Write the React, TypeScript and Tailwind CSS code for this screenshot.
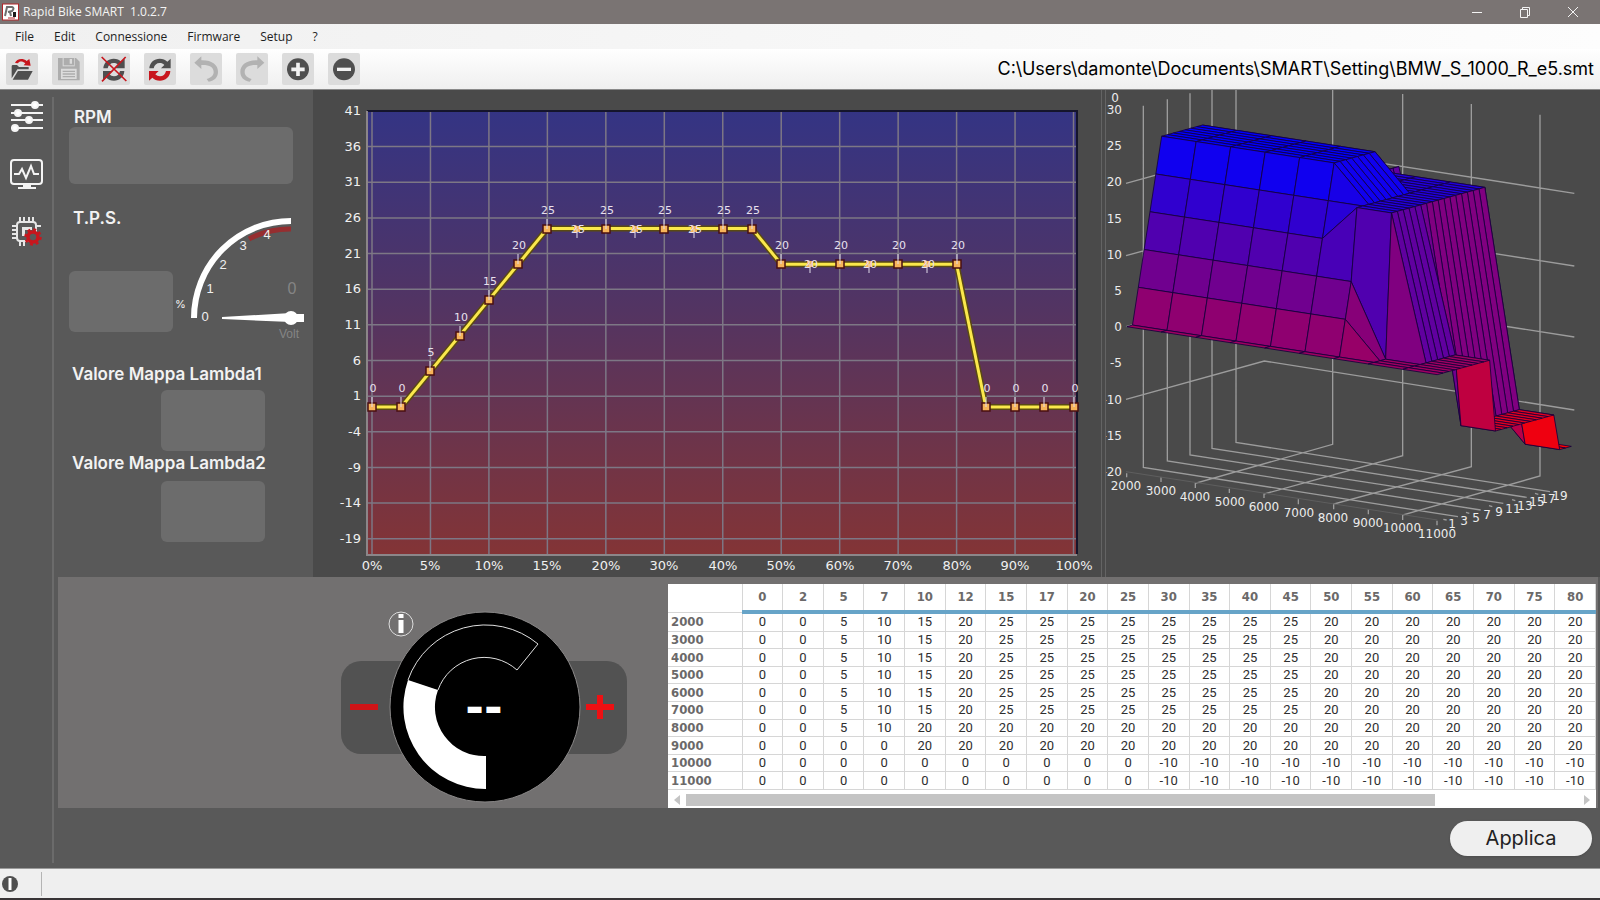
import type { ReactNode } from "react";

const MENU = ["File", "Edit", "Connessione", "Firmware", "Setup", "?"];

const TPS = [0, 2, 5, 7, 10, 12, 15, 17, 20, 25, 30, 35, 40, 45, 50, 55, 60, 65, 70, 75, 80];

const lowRow = [0, 0, 5, 10, 15, 20, 25, 25, 25, 25, 25, 25, 25, 25, 20, 20, 20, 20, 20, 20, 20];
const topRow = [...Array(10).fill(0), ...Array(11).fill(-10)];

const MAP: { rpm: number; values: number[] }[] = [
  { rpm: 2000, values: lowRow },
  { rpm: 3000, values: lowRow },
  { rpm: 4000, values: lowRow },
  { rpm: 5000, values: lowRow },
  { rpm: 6000, values: lowRow },
  { rpm: 7000, values: lowRow },
  { rpm: 8000, values: [0, 0, 5, 10, ...Array(17).fill(20)] },
  { rpm: 9000, values: [0, 0, 0, 0, ...Array(17).fill(20)] },
  { rpm: 10000, values: topRow },
  { rpm: 11000, values: topRow },
];

/* ---------- Toolbar ---------- */

function ToolButton({ label, children }: { label: string; children: ReactNode }) {
  return (
    <button type="button" aria-label={label} title={label} className="h-8 w-8 rounded-xs bg-[#dcdcdc] hover:bg-[#cfcfcf]">
      <svg viewBox="0 0 96 96" className="h-8 w-8">
        {children}
      </svg>
    </button>
  );
}

function SyncShape({ bottom }: { bottom: string }) {
  return (
    <>
      <path d="M16 46 C17 28 31 17 47 17 C57 17 64 20 70 26 L80 17 V46 H51 L61 36 C57 32 53 30 47 30 C38 30 31 36 29 46z" fill="#4f4f4f" />
      <path d="M79 54 C78 72 64 83 48 83 C38 83 31 80 25 74 L15 83 V54 H44 L34 64 C38 68 42 70 48 70 C57 70 64 64 66 54z" fill={bottom} />
    </>
  );
}

function Toolbar() {
  return (
    <div className="flex h-[41px] items-center justify-between border-b border-[#8a8a8a] bg-gradient-to-b from-white to-[#efefef] pr-[6px] pl-[6px]">
      <div className="flex gap-[14px]">
        <ToolButton label="Apri">
          <path d="M17 76 V40 Q17 36 21 36 H33 L39 42 H68 V49 H34z" fill="#4f4f4f" />
          <path d="M36 54 H80 L66 80 H20z" fill="#4f4f4f" />
          <path d="M27 30 C32 17 50 14 62 24 L70 18 L74 38 L53 37 L58 31 C48 23 39 25 36 31z" fill="#c8161d" />
        </ToolButton>
        <ToolButton label="Salva">
          <path d="M18 15 H72 L83 26 V82 H18z" fill="#adadad" />
          <path d="M32 14 H68 V40 H32z" fill="#dcdcdc" />
          <path d="M35 15 H66 V37 H35z" fill="#adadad" />
          <path d="M53 18 H60 V32 H53z M27 47 H74 V78 H27z" fill="#dcdcdc" />
          <path d="M32 55 H69 M32 63 H69 M32 71 H69" stroke="#adadad" strokeWidth="4" />
        </ToolButton>
        <ToolButton label="Disconnetti">
          <SyncShape bottom="#4f4f4f" />
          <path d="M11 12 L85 84 M83 12 L12 85" stroke="#c8161d" strokeWidth="5" />
        </ToolButton>
        <ToolButton label="Connetti">
          <SyncShape bottom="#c8161d" />
        </ToolButton>
        <ToolButton label="Annulla">
          <path d="M13 29 L34 10 V22 C66 21 84 36 84 56 C84 72 74 83 56 86 L50 78 C64 74 71 67 71 57 C71 42 58 35 34 36 V48z" fill="#b2b2b2" />
        </ToolButton>
        <ToolButton label="Ripristina">
          <path d="M85 29 L64 10 V22 C32 21 13 36 13 56 C13 72 23 83 41 86 L47 78 C33 74 26 67 26 57 C26 42 39 35 64 36 V48z" fill="#b2b2b2" />
        </ToolButton>
        <ToolButton label="Aumenta">
          <circle cx="48" cy="49" r="33" fill="#4f4f4f" />
          <path d="M48 29 V69 M28 49 H68" stroke="#f2f2f2" strokeWidth="11" />
        </ToolButton>
        <ToolButton label="Diminuisci">
          <circle cx="48" cy="49" r="33" fill="#4f4f4f" />
          <path d="M27 49 H69" stroke="#f2f2f2" strokeWidth="10" />
        </ToolButton>
      </div>
      <span className="font-['Inter',sans-serif] text-lg text-black">
        C:\Users\damonte\Documents\SMART\Setting\BMW_S_1000_R_e5.smt
      </span>
    </div>
  );
}

/* ---------- Sidebar ---------- */

function Sidebar() {
  return (
    <nav className="flex w-[54px] shrink-0 flex-col pt-[7px] pb-[5px]">
      <div className="flex flex-1 flex-col items-center gap-[22px] border-r-2 border-[#6b6b6b] pt-[2px] pl-[2px]">
        <button type="button" aria-label="Mappe">
          <svg viewBox="0 0 36 36" className="h-9 w-9" stroke="#f4f4f4" strokeWidth="2" fill="#ffffff">
            <path d="M2 6 H34 M2 14 H34 M2 21 H34 M2 29 H34" />
            <circle cx="26" cy="6" r="3" />
            <circle cx="9" cy="14" r="3" />
            <circle cx="20" cy="21" r="3" />
            <circle cx="6" cy="29" r="3" />
          </svg>
        </button>
        <button type="button" aria-label="Monitor">
          <svg viewBox="0 0 36 36" className="h-9 w-9" fill="none" stroke="#f4f4f4" strokeWidth="2">
            <rect x="2" y="3" width="31" height="24" rx="3" />
            <path d="M5 17 H10 L13 12 L17 21 L22 9 L25 17 H30" />
            <path d="M9 31 H27" />
            <path d="M14 29 H22" strokeWidth="3" />
          </svg>
        </button>
        <button type="button" aria-label="Centralina">
          <svg viewBox="0 0 36 36" className="h-9 w-9" fill="none" stroke="#e6e6e6" strokeWidth="2">
            <rect x="8" y="7" width="19" height="19" rx="3" />
            <path d="M11 2 V7 M15 2 V7 M20 2 V7 M24 2 V7 M11 26 V31 M15 26 V31 M3 11 H8 M3 15 H8 M3 19 H8 M3 23 H8 M27 11 H32" />
            <path d="M13 12 H23 V15 H16 V21 H13z" fill="#e6e6e6" stroke="none" />
            <circle cx="24" cy="22" r="5" stroke="#c8161d" strokeWidth="3.5" fill="#595959" />
            <circle cx="24" cy="22" r="7.5" stroke="#c8161d" strokeWidth="2.5" strokeDasharray="2.95 2.94" />
          </svg>
        </button>
      </div>
    </nav>
  );
}

/* ---------- Live values ---------- */

function VoltGauge() {
  return (
    <svg viewBox="0 0 130 130" className="h-[130px] w-[130px]" fontFamily="'Liberation Sans', sans-serif" fontSize="13" fontWeight="400" textAnchor="middle">
      <path d="M12 103 A97 97 0 0 1 109 6" fill="none" stroke="#ffffff" strokeWidth="6" />
      <path d="M67 24 A89 89 0 0 1 109 14" fill="none" stroke="#962e30" strokeWidth="5" />
      <g fill="#f0f0f0">
        <text x="23" y="106">0</text>
        <text x="28" y="78">1</text>
        <text x="41" y="54">2</text>
        <text x="61" y="35">3</text>
        <text x="85" y="24">4</text>
      </g>
      <text x="110" y="79" fontSize="16" fill="#858585">0</text>
      <text x="107" y="123" fontSize="12" fill="#858585">Volt</text>
      <path d="M40 102 L109 98 V107 L40 104z M109 99 H122 V107 H109z" fill="#ffffff" />
      <circle cx="109" cy="103" r="7" fill="#ffffff" />
    </svg>
  );
}

function Readouts() {
  return (
    <section className="bg-[#595959] pt-[15px] pl-[15px] font-['Inter',sans-serif] text-[17px] font-semibold text-[#f2f2f2]">
      <h2 className="h-[22px] pl-[5px] leading-6">RPM</h2>
      <output aria-label="RPM" className="block h-[57px] w-[224px] rounded-md bg-[#6c6c6c]" />
      <div className="flex h-[166px]">
        <div className="flex w-[104px] flex-col pt-[22px]">
          <h2 className="h-[65px] pl-1 leading-6">T.P.S.</h2>
          <output aria-label="T.P.S." className="block h-[61px] rounded-md bg-[#6c6c6c]" />
        </div>
        <span className="w-3 pt-[111px] pl-[2px] text-[11px] leading-[18px] font-normal">%</span>
        <div className="-ml-[3px] pt-[31px]">
          <VoltGauge />
        </div>
      </div>
      <h2 className="mt-[12px] h-[28px] pl-[3px] leading-6">Valore Mappa Lambda1</h2>
      <output aria-label="Valore Mappa Lambda1" className="ml-[92px] block h-[61px] w-[104px] rounded-md bg-[#6c6c6c]" />
      <h2 className="h-[30px] pl-[3px] leading-6">Valore Mappa Lambda2</h2>
      <output aria-label="Valore Mappa Lambda2" className="ml-[92px] block h-[61px] w-[104px] rounded-md bg-[#6c6c6c]" />
    </section>
  );
}

/* ---------- 2D chart ---------- */

const CURVE = [0, 0, 5, 10, 15, 20, 25, 25, 25, 25, 25, 25, 25, 25, 20, 20, 20, 20, 20, 20, 20, 0, 0, 0, 0];
const X_LABELS = ["0%", "5%", "10%", "15%", "20%", "30%", "40%", "50%", "60%", "70%", "80%", "90%", "100%"];
const Y_LABELS = [41, 36, 31, 26, 21, 16, 11, 6, 1, -4, -9, -14, -19];
// labels drawn on the line itself instead of above it
const INLINE_LABELS = [7, 9, 11, 15, 17, 19];

const px = (i: number) => 59 + i * 29.23;
const py = (v: number) => 317 - v * 7.14;

function CurveChart() {
  const points = CURVE.map((v, i) => `${px(i)},${py(v)}`).join(" ");
  return (
    <svg viewBox="0 0 788 487" className="h-full w-full" fontFamily="'DejaVu Sans', sans-serif">
      <defs>
        <linearGradient id="plot" x1="0" y1="0" x2="0" y2="1">
          <stop offset="0" stopColor="#343484" />
          <stop offset="0.45" stopColor="#533462" />
          <stop offset="1" stopColor="#833436" />
        </linearGradient>
      </defs>
      <rect x="54" y="21" width="710" height="443" fill="url(#plot)" />
      <g stroke="#7d7785" strokeWidth="1.5">
        {X_LABELS.map((label, i) => (
          <line key={label} x1={px(i * 2)} x2={px(i * 2)} y1="21" y2="464" />
        ))}
        {Y_LABELS.slice(1).map((v, i) => (
          <line key={v} x1="54" x2="764" y1={56.6 + i * 35.65} y2={56.6 + i * 35.65} />
        ))}
      </g>
      <path d="M54 21 H764 V464" fill="none" stroke="#15152c" strokeWidth="2" />
      <path d="M54 21 V465 H764" fill="none" stroke="#8c8689" strokeWidth="2" />
      <g fill="#f0f0f0" fontSize="13">
        {Y_LABELS.map((v, i) => (
          <text key={v} x="48" y={25 + Math.round(i * 35.65)} textAnchor="end">{v}</text>
        ))}
        {X_LABELS.map((label, i) => (
          <text key={label} x={Math.round(px(i * 2))} y="480" textAnchor="middle">{label}</text>
        ))}
      </g>
      <polyline points={points} fill="none" stroke="#5a4a12" strokeWidth="6" />
      <polyline points={points} fill="none" stroke="#fbe84c" strokeWidth="3" />
      {CURVE.map((v, i) => {
        const inline = INLINE_LABELS.includes(i);
        const x = Math.round(px(i));
        const y = Math.round(py(v));
        return (
          <g key={i}>
            {inline ? (
              <rect x={x - 3} y={y - 3} width="6" height="6" fill="#f7b45a" />
            ) : (
              <rect x={x - 4} y={y - 4} width="8" height="8" fill="#f7b45a" stroke="#4a0f10" strokeWidth="1.5" />
            )}
            <line x1={x} x2={x} y1={inline ? y + 9 : y - 10} y2={y} stroke="#e2dcea" strokeWidth="1" />
            <text x={x + 1} y={inline ? y + 4 : y - 15} fontSize="11" fill="#e8e0ee" textAnchor="middle">{v}</text>
          </g>
        );
      })}
    </svg>
  );
}

/* ---------- 3D map ---------- */

// Columns past 80% that exist in the map but are scrolled out of the table
const TAIL: Record<number, number> = { 6000: 20, 9000: -10, 10000: -15, 11000: -15 };
const SURFACE = MAP.map((row) => [...row.values, ...Array(3).fill(TAIL[row.rpm] ?? 0)]);

const project = (r: number, c: number, v: number) => [110 + c * 17.5 + r * 103.5, 740 - c * 4.8 + r * 16 - v * 21.7];

function surfaceQuads() {
  const quads: { points: string; fill: string }[] = [];
  for (let c = 23; c > 0; c--) {
    for (let r = 0; r < SURFACE.length - 1; r++) {
      const corners = [[r, c - 1], [r, c], [r + 1, c], [r + 1, c - 1]];
      const values = corners.map(([a, b]) => SURFACE[a][b]);
      const t = (values.reduce((a, b) => a + b, 0) / 4 + 15) / 40;
      quads.push({
        points: corners.map(([a, b], k) => project(a, b, values[k]).join(",")).join(" "),
        fill: `rgb(${Math.round(255 * (1 - t))} 0 ${Math.round(255 * t)})`,
      });
    }
  }
  return quads;
}

const GRID = [
  "M160 77 V1162 L1104 1310 M232 58 V1143 L1172 1290 M300 40 V1125 L1240 1270 M366 30 V1105 L1310 1252 M438 30 V1087 L1380 1235",
  "M728 30 V1093 L316 1210 V1224 M938 42 V1127 L522 1242 V1254 M1144 72 V1160 L731 1272 V1288 M1350 104 V1188 L938 1305 V1320",
  "M108 310 L523 195 L1453 340 M108 527 L523 413 L1453 558 M108 740 L523 626 L1453 771 M108 958 L523 843 L1453 990",
  "M110 1180 V1192 M213 1192 V1206 M418 1226 V1239 M625 1258 V1273 M835 1288 V1303 M1041 1322 V1336",
  "M1060 1318 L1070 1320 M1128 1297 L1138 1300 M1197 1277 L1207 1280 M1266 1259 L1276 1262 M1335 1240 L1345 1243",
];

const Z_LABELS = [30, 25, 20, 15, 10, 5, 0, -5, -10, -15, -20];
const TPS_LABELS = [
  [1, 346, 438], [3, 358, 435], [5, 370, 432], [7, 381, 429], [9, 393, 426],
  [11, 407, 423], [13, 419, 420], [15, 431, 416], [17, 442, 413], [19, 454, 410],
];

function SurfaceChart() {
  return (
    <svg viewBox="0 0 494 487" className="h-full w-full" fontFamily="'DejaVu Sans', sans-serif" fontSize="12" fill="#ececec">
      <g transform="scale(0.33333) translate(-48 -30)">
        <path d={GRID.join(" ")} fill="none" stroke="#9c9c9c" strokeWidth="4" />
        <path d="M108 1175 L1042 1320" stroke="#5e5e5e" strokeWidth="3" />
        {surfaceQuads().map((q, i) => (
          <polygon key={i} points={q.points} fill={q.fill} stroke="#14003c" strokeWidth="2.5" strokeLinejoin="round" />
        ))}
      </g>
      <text x="9" y="12" textAnchor="middle">0</text>
      {Z_LABELS.map((v, i) => (
        <text key={v} x="16" y={24 + Math.round(i * 36.2)} textAnchor="end">{v}</text>
      ))}
      {MAP.map(({ rpm }, i) => (
        <text key={rpm} x={20 + Math.round(i * 34.5)} y={400 + Math.round(i * 5.3)} textAnchor="middle">{rpm}</text>
      ))}
      {TPS_LABELS.map(([label, x, y]) => (
        <text key={label} x={x} y={y} textAnchor="middle">{label}</text>
      ))}
    </svg>
  );
}

/* ---------- Bottom area ---------- */

function Dial() {
  return (
    <section className="pt-[34px] pl-[283px]">
      <div className="relative flex w-[286px] items-center">
        <button type="button" aria-label="Meno" className="h-[93px] w-[100px] rounded-[20px] bg-[#525252] pl-2">
          <svg viewBox="0 0 30 30" className="h-[30px] w-[30px]">
            <path d="M1 15 H29" stroke="#cf1417" strokeWidth="6" />
          </svg>
        </button>
        <svg viewBox="0 0 192 192" className="relative z-10 -mx-[52px] h-48 w-48 shrink-0">
          <circle cx="96" cy="96" r="95" fill="#000000" stroke="#8a8888" strokeWidth="1" />
          <path d="M19 69 A82 82 0 0 1 149 33 L128 59 A49 49 0 0 0 49 79" fill="none" stroke="#e0e0e0" strokeWidth="1" />
          <path d="M97 178 A82 82 0 0 1 19 69 L49 79 A49 49 0 0 0 97 145z" fill="#ffffff" />
          <text x="95" y="112" fill="#ffffff" textAnchor="middle" fontFamily="'DejaVu Sans', sans-serif" fontSize="45" fontWeight="700">--</text>
        </svg>
        <button type="button" aria-label="Più" className="h-[93px] w-[98px] rounded-[20px] bg-[#525252] pl-[56px]">
          <svg viewBox="0 0 30 30" className="h-[30px] w-[30px]">
            <path d="M1 15 H29 M15 3 V27" stroke="#ee1013" strokeWidth="6" />
          </svg>
        </button>
        <button type="button" aria-label="Informazioni" className="absolute top-0 left-[47px]">
          <svg viewBox="0 0 26 26" className="h-[26px] w-[26px]">
            <circle cx="13" cy="13" r="12" fill="none" stroke="#dddddd" strokeWidth="1" />
            <path d="M13 3 V7 M13 9 V22" stroke="#ffffff" strokeWidth="5" />
          </svg>
        </button>
      </div>
    </section>
  );
}

function MapTable() {
  return (
    <div className="mt-[7px] mr-[2px] flex flex-col bg-white">
      <table className="h-[206px] w-full table-fixed border-collapse font-['Roboto',sans-serif] text-[13px] leading-4 text-[#2e2e2e]">
        <thead className="font-['DejaVu_Sans_Condensed','DejaVu_Sans',sans-serif] text-[13px] text-[#6b6969]">
          <tr className="h-7">
            <td className="w-[74px] border-r border-b border-[#d6d6d6]" />
            {TPS.map((t) => (
              <th key={t} scope="col" className="border-r border-b-4 border-r-[#d6d6d6] border-b-[#67a4c8] p-0">
                {t}
              </th>
            ))}
          </tr>
        </thead>
        <tbody>
          {MAP.map((row) => (
            <tr key={row.rpm}>
              <th scope="row" className="border-r border-b border-[#d6d6d6] py-0 pl-[3px] text-left font-['DejaVu_Sans_Condensed','DejaVu_Sans',sans-serif] text-[13px] leading-4 text-[#6b6969]">
                {row.rpm}
              </th>
              {row.values.map((v, i) => (
                <td key={i} className="border-r border-b border-[#d6d6d6] p-0 text-center">
                  {v}
                </td>
              ))}
            </tr>
          ))}
        </tbody>
      </table>
      <div className="flex h-[18px] items-end gap-[6px] px-[6px] pb-[2px]">
        <svg viewBox="0 0 6 12" className="h-3 w-[6px]"><path d="M6 1 V11 L0 6z" fill="#c4c4c4" /></svg>
        <div className="h-3 flex-1">
          <div className="h-3 w-[84%] bg-[#c4c4c4]" />
        </div>
        <svg viewBox="0 0 6 12" className="h-3 w-[6px]"><path d="M0 1 V11 L6 6z" fill="#c4c4c4" /></svg>
      </div>
    </div>
  );
}

export default function App() {
  return (
    <div className="flex h-screen min-h-[760px] flex-col overflow-hidden bg-[#595959]">
      {/* Title bar */}
      <header className="flex h-6 shrink-0 items-center justify-between bg-[#7a7473] pr-[21px] pl-[2px]">
        <div className="flex items-center gap-[3px]">
          <svg viewBox="0 0 18 18" className="h-[18px] w-[18px]">
            <rect x="0.5" y="1" width="16" height="16" fill="#ffffff" stroke="#b3272b" />
            <path d="M3 13 L5 4 H10 Q13 5 10 8 L6 9 M8 9 L9 13" fill="none" stroke="#6e6e6e" strokeWidth="2" />
            <path d="M11 9 H14 V14 H11z" fill="#1c1c1c" />
            <path d="M6 15 H13" stroke="#b3272b" strokeWidth="1" />
          </svg>
          <h1 className="font-['Open_Sans',sans-serif] text-xs whitespace-pre text-[#f4f4f4]">{"Rapid Bike SMART  1.0.2.7"}</h1>
        </div>
        <div className="flex gap-9">
          <button type="button" aria-label="Riduci">
            <svg viewBox="0 0 12 12" className="h-3 w-3" stroke="#f4f4f4"><path d="M1 6.5 H11" /></svg>
          </button>
          <button type="button" aria-label="Ripristina finestra">
            <svg viewBox="0 0 12 12" className="h-3 w-3" fill="none" stroke="#f4f4f4"><path d="M1.5 3.5 H8.5 V11.5 H1.5z M3.5 3.5 V1.5 H10.5 V9.5 H8.5" /></svg>
          </button>
          <button type="button" aria-label="Chiudi">
            <svg viewBox="0 0 12 12" className="h-3 w-3" stroke="#f4f4f4"><path d="M1 1 L11 11 M11 1 L1 11" /></svg>
          </button>
        </div>
      </header>

      {/* Menu */}
      <nav className="flex h-[25px] shrink-0 items-center gap-5 bg-gradient-to-r from-[#f0f0f0] to-[#fdfdfd] pl-[15px] font-['Open_Sans',sans-serif] text-xs text-[#1e1e1e]">
        {MENU.map((item) => (
          <button key={item} type="button">{item}</button>
        ))}
      </nav>
      <Toolbar />

      {/* Workspace */}
      <main className="flex min-h-0 flex-1">
        <Sidebar />
        <div className="flex min-w-0 flex-1 flex-col">
          <div className="grid min-h-0 flex-1 grid-cols-[259px_788fr_5px_494fr]">
            <Readouts />
            <section aria-label="Curva" className="min-h-0 bg-[#4a4a4a]">
              <CurveChart />
            </section>
            <div className="border-x border-[#646464] bg-[#4a4a4a]" />
            <section aria-label="Mappa 3D" className="min-h-0 bg-[#4a4a4a]">
              <SurfaceChart />
            </section>
          </div>
          <div className="mr-[2px] ml-1 grid h-[231px] grid-cols-[610px_1fr] bg-[#727070]">
            <Dial />
            <MapTable />
          </div>
          <div className="flex h-[60px] items-center justify-end pr-2">
            <button type="button" className="h-[35px] w-[142px] rounded-full bg-[#efefef] font-['Inter',sans-serif] text-xl text-[#222222] shadow">
              Applica
            </button>
          </div>
        </div>
      </main>

      {/* Status bar */}
      <footer className="flex h-8 shrink-0 items-center gap-[22px] border-t border-b-2 border-t-[#9a9a9a] border-b-[#383436] bg-[#efefef] pl-px">
        <svg viewBox="0 0 18 18" className="h-[18px] w-[18px]">
          <circle cx="9" cy="9" r="8" fill="#4f4f4f" />
          <path d="M9 3 V15" stroke="#ffffff" strokeWidth="3" />
        </svg>
        <div className="h-6 w-px bg-[#b4b4b4]" />
      </footer>
    </div>
  );
}
